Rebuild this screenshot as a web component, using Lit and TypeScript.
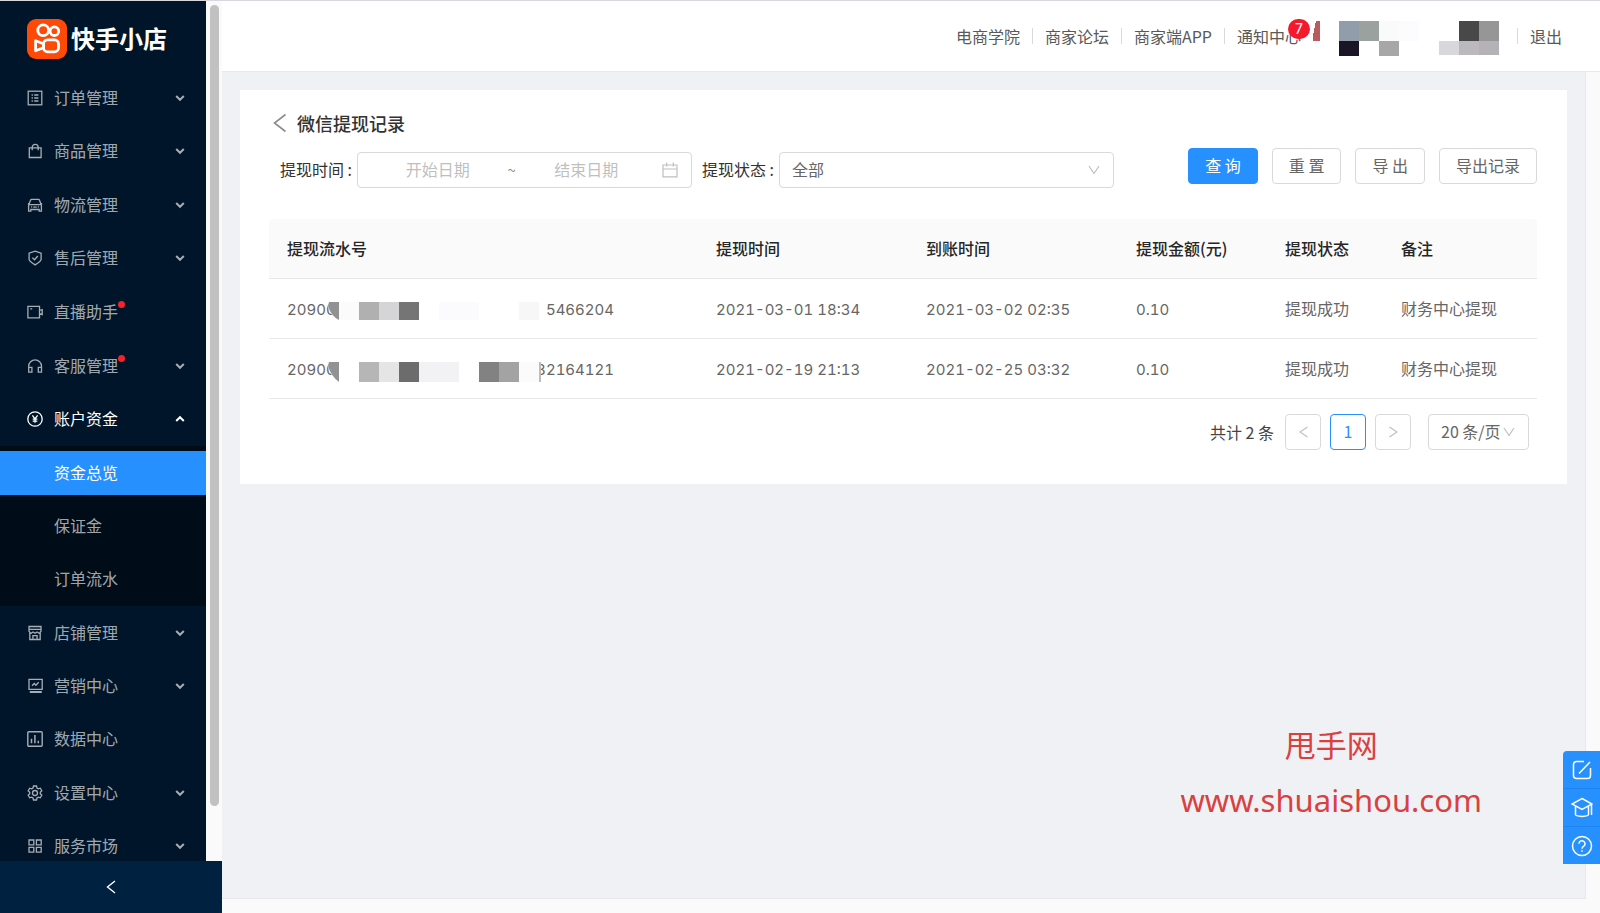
import { LitElement, html, css, svg, nothing, type TemplateResult } from "lit";
import { customElement, property, state } from "lit/decorators.js";
import { classMap } from "lit/directives/class-map.js";

const ICONS: Record<string, TemplateResult> = {
  order: svg`<rect x="1.200" y="1.200" width="13.600" height="13.600"/><path d="M4.600 5h1.300M4.600 8h1.300M4.600 11h1.300M7.200 5h4.200M7.200 8h4.200M7.200 11h4.200"/>`,
  goods: svg`<path d="M2.300 4.800h11.800v9.700H2.300zM5.200 7.200V4.400a3 3 0 0 1 6 0v2.800"/>`,
  logistics: svg`<path d="M1.600 14.200V8.400L3.500 3.200q.3-.9 1.200-.9h6.600q.9 0 1.200.9l1.900 5.200v5.800h-2.200v-1.700H3.800v1.700zM.9 6.600l1 .6M15.100 6.600l-1 .6M2 7.700h12M4 9.900h1.200M10.800 9.900H12M6.300 10.200h3.400"/>`,
  shield: svg`<path d="M8.100 1.100l6 2v6.300q0 1.500-6 5.500-6-4-6-5.500V3.100zM5.300 7.600l2.200 2.100 3.300-3.700"/>`,
  live: svg`<path d="M.9 2.300h11.600v11.600H.9zM12.500 6.500l2.700-.9v5l-2.700-.9M3.200 4.800h2"/>`,
  service: svg`<path d="M1.700 13.800V8.300a6.400 6.400 0 0 1 12.800 0v5.500M1.700 9.300h3.200v4.900H1.700zM11.300 9.300h3.200v4.900h-3.200z"/>`,
  money: svg`<circle cx="8" cy="8" r="7.200"/><path d="M5.400 4.300L8 7.800l2.600-3.500M8 7.800v4M5.700 8.200h4.600M5.700 10.100h4.600"/>`,
  shop: svg`<path d="M2 1.500h12v4.700l-.8 1v7.300H2.800V7.200l-.8-1zM2 4.300h12M2.300 7.300l1.800 1 2-1.300 2 1.300 2-1.300 2 1.300 1.600-1M5.900 14.300v-3.600h4.200v3.600"/>`,
  marketing: svg`<path d="M2 1.400h13.200v10H2zM5 7.800l2.300-2.300 1.600 1.700 2.800-2.900"/><path stroke-width="2" d="M2.800 14h12"/>`,
  data: svg`<rect x=".8" y=".8" width="14.400" height="14.400" rx="1" stroke-width="1.400"/><path stroke-width="1.500" d="M4.500 12.300V7.700M7.900 12.300V4M11.300 12.300v-2.600"/>`,
  setting: svg`<circle cx="8" cy="8" r="2.500"/><path d="M6.500 1h3l.5 2 1.300.8 2-.6 1.500 2.600-1.500 1.400v1.600l1.500 1.400-1.500 2.600-2-.6-1.300.8-.5 2h-3L6 13l-1.300-.8-2 .6-1.500-2.600 1.500-1.400V7.200L1.200 5.800l1.500-2.600 2 .6L6 3z"/>`,
  market: svg`<path d="M2 2h4.800v4.800H2zM9.400 2h4.800v4.800H9.400zM2 9.300h4.800v4.800H2zM9.400 9.300h4.800v4.800H9.400z"/>`,
};

interface MenuEntry {
  icon: string;
  label: string;
  fold: boolean;
  dot?: boolean;
  open?: boolean;
}

const UPPER: MenuEntry[] = [
  { icon: "order", label: "订单管理", fold: true },
  { icon: "goods", label: "商品管理", fold: true },
  { icon: "logistics", label: "物流管理", fold: true },
  { icon: "shield", label: "售后管理", fold: true },
  { icon: "live", label: "直播助手", fold: false, dot: true },
  { icon: "service", label: "客服管理", fold: true, dot: true },
  { icon: "money", label: "账户资金", fold: true, open: true },
];
const LOWER: MenuEntry[] = [
  { icon: "shop", label: "店铺管理", fold: true },
  { icon: "marketing", label: "营销中心", fold: true },
  { icon: "data", label: "数据中心", fold: false },
  { icon: "setting", label: "设置中心", fold: true },
  { icon: "market", label: "服务市场", fold: true },
];

@customElement("side-bar")
class SideBar extends LitElement {
  @state() private active = "资金总览";

  static styles = css`
    :host { display: flex; flex-direction: column; min-height: 0; color: rgba(255, 255, 255, 0.65); }
    a { color: inherit; text-decoration: none; }
    .body { flex: 1; min-height: 0; display: flex; background: #fafafa; }
    .menu { flex: 1; overflow: hidden; background: #001529; }
    .track { width: 16px; padding: 4px 3px 0 4px; box-sizing: border-box; }
    .thumb { height: 801px; max-height: 94%; border-radius: 5px; background: #c1c1c1; }
    .logo { display: flex; align-items: center; gap: 4px; height: 70px; padding: 6px 0 0 27px; box-sizing: border-box; color: #fff; font-size: 24px; font-weight: 700; line-height: 32px; }
    .logo svg { width: 40px; height: 40px; flex: none; }
    .logo span { padding-bottom: 2px; }
    .group { display: grid; grid-auto-rows: 1fr; }
    .upper { height: 375px; }
    .lower { height: 267px; }
    .item { display: flex; align-items: center; padding: 0 21px 0 27px; }
    .item.open { color: #fff; }
    .icon { width: 16px; height: 16px; fill: none; stroke: currentColor; stroke-width: 1.3; margin-right: 11px; }
    .label { position: relative; padding-bottom: 2px; }
    .dot { position: absolute; top: 2px; right: -7px; width: 7px; height: 7px; border-radius: 50%; background: #f5222d; }
    .arrow { width: 10px; height: 8px; margin-left: auto; fill: none; stroke: currentColor; stroke-width: 2; }
    .sub { display: grid; gap: 9px; padding: 5px 0; background: #000c17; }
    .sub a { display: flex; align-items: center; height: 44px; box-sizing: border-box; padding: 0 0 2px 54px; }
    .sub a.active { background: #2790ff; color: #fff; }
    .fold { display: flex; align-items: center; justify-content: center; height: 52px; border: 0; padding: 0; background: #002140; color: #fff; }
    .fold svg { width: 10px; height: 14px; fill: none; stroke: currentColor; stroke-width: 1.4; }
  `;

  private item(e: MenuEntry) {
    return html`<a href="#" class=${classMap({ item: true, open: !!e.open })}>
      <svg class="icon" viewBox="0 0 16 16" aria-hidden="true">${ICONS[e.icon]}</svg>
      <span class="label">${e.label}${e.dot ? html`<i class="dot"></i>` : nothing}</span>
      ${e.fold
        ? html`<svg class="arrow" viewBox="0 0 10 8" aria-hidden="true"><path d=${e.open ? "M1.200 6l3.800-3.800L8.800 6" : "M1.200 2l3.800 3.800L8.800 2"} /></svg>`
        : nothing}
    </a>`;
  }

  render() {
    return html`
      <div class="body">
        <nav class="menu">
          <div class="logo">
            <svg viewBox="0 0 40 40" aria-hidden="true">
              <rect width="40" height="40" rx="9" fill="#ff4906" />
              <g fill="none" stroke="#fff" stroke-width="2.800">
                <circle cx="16.200" cy="11.200" r="5.400" />
                <circle cx="27.400" cy="12.200" r="4.300" />
                <rect x="16.500" y="20.800" width="15" height="12" rx="4" />
                <path stroke-linejoin="round" d="M16.500 24.800L8.600 21.800v10l7.900-3z" />
              </g>
            </svg>
            <span>快手小店</span>
          </div>
          <div class="group upper">${UPPER.map((e) => this.item(e))}</div>
          <div class="sub">
            ${["资金总览", "保证金", "订单流水"].map(
              (t) => html`<a href="#" class=${classMap({ active: t === this.active })} @click=${() => (this.active = t)}>${t}</a>`
            )}
          </div>
          <div class="group lower">${LOWER.map((e) => this.item(e))}</div>
        </nav>
        <div class="track"><div class="thumb"></div></div>
      </div>
      <button class="fold" aria-label="收起菜单">
        <svg viewBox="0 0 10 14"><path d="M9 1L1.500 7 9 13" /></svg>
      </button>
    `;
  }
}

@customElement("top-bar")
class TopBar extends LitElement {
  static styles = css`
    :host { display: flex; align-items: center; justify-content: flex-end; gap: 12px; height: 70px; padding-right: 38px; background: #fff; border-bottom: 1px solid #e8e8ea; color: #595959; }
    a { color: inherit; text-decoration: none; }
    .rule { width: 1px; height: 16px; background: #d9d9d9; }
    .notice { position: relative; }
    .badge { position: absolute; left: 51px; top: -5px; width: 22px; height: 20px; border-radius: 10px; background: #f5192d; color: #fff; font: 14px/20px Inter, sans-serif; text-align: center; }
    .user { width: 188px; height: 36px; margin: 6px 4px 0 0; }
  `;

  render() {
    return html`
      <a href="#">电商学院</a><i class="rule"></i>
      <a href="#">商家论坛</a><i class="rule"></i>
      <a href="#">商家端APP</a><i class="rule"></i>
      <a href="#" class="notice">通知中心<span class="badge">7</span></a>
      <svg class="user" viewBox="2 0 188 36" shape-rendering="crispEdges" aria-hidden="true">
        <path d="M4 0h4v20H0z" transform="translate(1 0)" fill="#b95c62" />
        <path d="M28 0h20v20H28z" fill="#929dab" /><path d="M48 0h20v20H48z" fill="#9ba19f" />
        <path d="M68 0h20v20H68z" fill="#fafafa" /><path d="M88 0h20v20H88z" fill="#fcfcfe" />
        <path d="M28 20h20v15H28z" fill="#1b1625" /><path d="M68 20h20v15H68z" fill="#a7a7a7" />
        <path d="M148 0h20v20h-20z" fill="#484848" /><path d="M168 0h20v20h-20z" fill="#969696" />
        <path d="M128 20h20v14h-20z" fill="#d8d7dc" /><path d="M148 20h20v14h-20z" fill="#bbb9be" />
        <path d="M168 20h20v14h-20z" fill="#b4b2b7" />
      </svg>
      <i class="rule"></i><a href="#">退出</a>
    `;
  }
}

interface Block { x: number; w: number; fill: string }
interface Withdrawal {
  head: string;
  tail: string;
  maskHeight: number;
  blocks: Block[];
  applied: string;
  arrived: string;
}

const RECORDS: Withdrawal[] = [
  {
    head: "20900", tail: "5466204", maskHeight: 18, applied: "2021-03-01 18:34", arrived: "2021-03-02 02:35",
    blocks: [
      { x: 11, w: 20, fill: "#fbfbfb" }, { x: 31, w: 20, fill: "#b0b0b1" }, { x: 51, w: 20, fill: "#d5d5d7" },
      { x: 71, w: 20, fill: "#757576" }, { x: 111, w: 40, fill: "#fbfbfe" }, { x: 191, w: 20, fill: "#f7f7f8" },
    ],
  },
  {
    head: "20900", tail: "32164121", maskHeight: 20, applied: "2021-02-19 21:13", arrived: "2021-02-25 03:32",
    blocks: [
      { x: 31, w: 20, fill: "#b6b6b6" }, { x: 51, w: 20, fill: "#e5e5e5" }, { x: 71, w: 20, fill: "#6c6c6c" },
      { x: 91, w: 40, fill: "#f2f2f4" }, { x: 151, w: 20, fill: "#828282" }, { x: 171, w: 20, fill: "#a3a3a3" },
      { x: 191, w: 20, fill: "#fbfbfc" }, { x: 211, w: 2, fill: "#bdbdbd" },
    ],
  },
];

@customElement("withdraw-table")
class WithdrawTable extends LitElement {
  @property({ attribute: false }) rows: Withdrawal[] = [];

  static styles = css`
    :host { display: block; }
    table { width: 100%; table-layout: fixed; border-collapse: separate; border-spacing: 0; }
    th, td { height: 60px; box-sizing: border-box; padding: 0 18px 2px; border-bottom: 1px solid #e8e8e8; text-align: left; white-space: nowrap; }
    th { background: #fafafa; color: #262626; font-weight: 500; }
    th:first-child { border-top-left-radius: 4px; }
    th:last-child { border-top-right-radius: 4px; }
    td { color: #666; }
    .num { padding: 2px 18px 0; font-family: Inter, sans-serif; font-size: 15px; font-variant-numeric: tabular-nums; }
    .time { width: 210px; }
    .sum { width: 149px; }
    .state { width: 116px; }
    .note { width: 154px; }
    .serial { position: relative; display: flex; justify-content: space-between; width: 327px; }
    .mask { position: absolute; left: 41px; top: 4px; width: 220px; }
  `;

  render() {
    return html`<table>
      <thead>
        <tr>
          <th>提现流水号</th><th class="time">提现时间</th><th class="time">到账时间</th>
          <th class="sum">提现金额(元)</th><th class="state">提现状态</th><th class="note">备注</th>
        </tr>
      </thead>
      <tbody>
        ${this.rows.map(
          (r) => html`<tr>
            <td class="num">
              <div class="serial">
                <span>${r.head}</span><span>${r.tail}</span>
                <svg class="mask" height=${r.maskHeight} viewBox="0 0 220 ${r.maskHeight}" preserveAspectRatio="none" aria-hidden="true">
                  <path d="M3 0h208v${r.maskHeight}H11Q2 14 0 4z" fill="#fff" />
                  <path d="M1 0h10v${r.maskHeight}Q3 14 0 4z" fill="#929292" />
                  ${r.blocks.map((b) => svg`<rect x=${b.x} y="0" width=${b.w} height=${r.maskHeight} fill=${b.fill}/>`)}
                </svg>
              </div>
            </td>
            <td class="num">${r.applied}</td>
            <td class="num">${r.arrived}</td>
            <td class="num">0.10</td>
            <td>提现成功</td>
            <td>财务中心提现</td>
          </tr>`
        )}
      </tbody>
    </table>`;
  }
}

@customElement("app-root")
class AppRoot extends LitElement {
  static styles = css`
    :host {
      display: grid; grid-template-columns: 222px minmax(0, 1fr); grid-template-rows: minmax(0, 1fr); height: 100vh; box-sizing: border-box; overflow: hidden;
      border-top: 1px solid #d8d8de; background: #fafafa;
      font: 16px/24px "Noto Sans CJK SC", "Noto Sans", sans-serif;
    }
    button, input, select { font: inherit; color: inherit; }
    .page { display: flex; flex-direction: column; min-width: 0; }
    .content { flex: 1; margin: 0 14px 14px 0; padding: 18px; background: #f0f1f5; border: solid #e9e9ec; border-width: 0 1px 1px 0; }
    .card { padding: 19px 30px 34px 29px; background: #fff; }
    .title { display: flex; align-items: center; gap: 11px; height: 28px; padding-left: 4px; }
    h1 { margin: 0; font-size: 18px; line-height: 28px; font-weight: 500; color: #333; }
    .back { display: flex; border: 0; padding: 0; background: none; color: #8c8c8c; }
    .back svg { width: 13px; height: 20px; fill: none; stroke: currentColor; stroke-width: 1.6; }
    .filters { display: flex; align-items: flex-start; padding: 11px 0 31px 11px; }
    .field { display: flex; align-items: center; flex: 0 1 412px; min-width: 0; margin: 4px 10px 0 0; color: #333; }
    .field > label { width: 77px; flex: none; padding-bottom: 2px; box-sizing: border-box; white-space: nowrap; }
    .box { display: flex; align-items: center; flex: 1; min-width: 0; height: 36px; box-sizing: border-box; border: 1px solid #d9d9d9; border-radius: 4px; background: #fff; color: #666; }
    .range { padding: 0 13px 0 10px; }
    .range input { flex: 1; min-width: 0; border: 0; padding: 0 0 2px; background: none; text-align: center; }
    .range input::placeholder { color: #bfbfbf; opacity: 1; }
    .range svg { width: 16px; height: 16px; margin-left: 6px; fill: none; stroke: #bfbfbf; stroke-width: 1.2; }
    .tilde { width: 9px; font-size: 15px; color: #8c8c8c; }
    .pick { position: relative; }
    .pick select { width: 100%; height: 100%; appearance: none; border: 0; padding: 0 30px 2px 12px; background: none; }
    .pick svg { position: absolute; right: 13px; width: 12px; height: 10px; fill: none; stroke: #bfbfbf; stroke-width: 1.2; pointer-events: none; }
    .actions { display: flex; flex: none; gap: 14px; margin-left: auto; }
    .btn { height: 36px; padding: 0 16px 2px; border: 1px solid #d9d9d9; border-radius: 4px; background: #fff; color: #666; white-space: nowrap; }
    .btn.primary { border-color: #2790ff; background: #2790ff; color: #fff; }
    .pager { display: flex; align-items: center; gap: 9px; justify-content: flex-end; padding: 15px 8px 0 0; color: #444; }
    .total { margin-right: 2px; }
    .cell { display: flex; align-items: center; justify-content: center; width: 36px; height: 36px; box-sizing: border-box; padding: 0; border: 1px solid #d9d9d9; border-radius: 4px; background: #fff; }
    .cell svg { width: 9px; height: 12px; fill: none; stroke: #bfbfbf; stroke-width: 1.2; }
    .cell.on { padding-bottom: 2px; border-color: #2790ff; color: #2790ff; }
    .size { flex: none; width: 101px; margin-left: 8px; }
    .size select { padding-right: 12px; }
    .watermark { position: absolute; right: 118px; bottom: 86px; text-align: center; font: 31px/54px "Noto Sans", "Noto Sans CJK SC", sans-serif; color: #d94141; }
    .watermark div { font-family: "Noto Sans CJK SC", sans-serif; line-height: 58px; }
    .tools { position: absolute; right: 0; bottom: 49px; width: 37px; border-radius: 4px 0 0 0; background: #2790ff; overflow: hidden; }
    .tools button { display: flex; align-items: center; justify-content: center; width: 100%; height: 37px; box-sizing: content-box; padding: 0; border: 0; background: none; color: #fff; }
    .tools button + button { border-top: 1px solid #1f83f0; }
    .tools svg { width: 22px; height: 22px; fill: none; stroke: currentColor; stroke-width: 1.5; }
  `;

  render() {
    const down = html`<svg viewBox="0 0 12 10" aria-hidden="true"><path d="M1 1l5 7.500L11 1" /></svg>`;
    return html`
      <side-bar></side-bar>
      <div class="page">
        <top-bar></top-bar>
        <main class="content">
          <section class="card">
            <div class="title">
              <button class="back" aria-label="返回"><svg viewBox="0 0 13 20"><path d="M12.500 1.500L1.500 10l11 8.500" /></svg></button>
              <h1>微信提现记录</h1>
            </div>
            <form class="filters" @submit=${(e: Event) => e.preventDefault()}>
              <div class="field">
                <label for="start">提现时间 :</label>
                <div class="box range">
                  <input id="start" type="text" placeholder="开始日期" />
                  <span class="tilde">~</span>
                  <input type="text" placeholder="结束日期" aria-label="结束日期" />
                  <svg viewBox="0 0 16 16" aria-hidden="true"><path d="M1 3h14v11.800H1zM1 7h14M4.700.6v4M11.300.6v4" /></svg>
                </div>
              </div>
              <div class="field">
                <label for="status">提现状态 :</label>
                <div class="box pick">
                  <select id="status"><option>全部</option></select>
                  ${down}
                </div>
              </div>
              <div class="actions">
                <button class="btn primary">查 询</button>
                <button class="btn" type="reset">重 置</button>
                <button class="btn" type="button">导 出</button>
                <button class="btn" type="button">导出记录</button>
              </div>
            </form>
            <withdraw-table .rows=${RECORDS}></withdraw-table>
            <div class="pager">
              <span class="total">共计 2 条</span>
              <button class="cell" aria-label="上一页"><svg viewBox="0 0 9 12"><path d="M8.500 1L1 6l7.500 5" /></svg></button>
              <button class="cell on">1</button>
              <button class="cell" aria-label="下一页"><svg viewBox="0 0 9 12"><path d="M.5 1L8 6 .5 11" /></svg></button>
              <div class="box pick size">
                <select aria-label="每页条数"><option>20 条/页</option></select>
                ${down}
              </div>
            </div>
          </section>
        </main>
      </div>
      <div class="watermark"><div>甩手网</div>www.shuaishou.com</div>
      <div class="tools">
        <button aria-label="反馈"><svg viewBox="0 0 22 22"><path d="M13 2.500H5.500a3 3 0 0 0-3 3v11a3 3 0 0 0 3 3h11a3 3 0 0 0 3-3V9M8 14.500L19 3" /></svg></button>
        <button aria-label="学院"><svg viewBox="0 0 22 22"><path d="M11 1.500l10 5.500-10 5.500L1 7zM4.500 9.500v8q0 1.500 6.500 2 6.500-.5 6.500-2v-8M20.500 8v10" /></svg></button>
        <button aria-label="帮助"><svg viewBox="0 0 22 22"><circle cx="11" cy="11" r="9.500" /><path d="M8 8.800a3 3 0 1 1 4.700 2.400Q11 12.300 11 13.800M11 15.200v1.600" /></svg></button>
      </div>
    `;
  }
}
